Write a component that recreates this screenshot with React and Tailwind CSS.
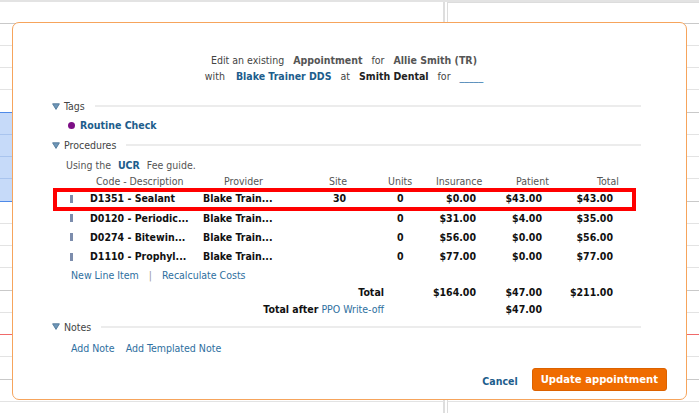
import React from "react";

const slots = Array.from({ length: 18 }, (_, i) => i);

function SlotRow({ i }) {
  const hour = i % 4 === 0;
  const nowLine = i === 14;
  const booked = i >= 4 && i <= 7;
  let leftTop = hour ? "border-[#c9c9c9]" : "border-[#e3e3e3]";
  let rightTop = leftTop;
  if (nowLine) {
    leftTop = "border-[#f06a6a]";
    rightTop = "border-[#f06a6a]";
  }
  if (i === 4 || i === 8) leftTop = "border-[#4f8ae8]";
  else if (booked) leftTop = "border-[#a9c4ee]";
  return (
    <div className="flex h-[22.25px]">
      <div
        className={`w-[445px] border-t border-r-2 border-r-[#dedede] ${leftTop} ${
          booked ? "bg-[#c6daf9]" : "bg-white"
        }`}
      />
      <div className="w-[2px]" />
      <div className={`flex-1 border-t border-l border-l-[#dcdcdc] ${rightTop}`} />
    </div>
  );
}

function Triangle() {
  return (
    <svg width="8" height="7" viewBox="0 0 8 7" className="shrink-0">
      <polygon points="0.6,0.8 7.4,0.8 4,6.4" fill="#6f97b8" stroke="#4f7898" strokeWidth="0.9" strokeLinejoin="round" />
    </svg>
  );
}

function SectionHeader({ label, className = "" }) {
  return (
    <div className={`flex items-center h-[18px] ${className}`}>
      <Triangle />
      <span className="ml-[4px] text-[#444]">{label}</span>
      <div className="ml-[10px] flex-1 h-[2px] bg-[#ececec]" />
    </div>
  );
}

const rows = [
  { code: "D1351 - Sealant", site: "30", ins: "$0.00", pat: "$43.00", tot: "$43.00" },
  { code: "D0120 - Periodic...", site: "", ins: "$31.00", pat: "$4.00", tot: "$35.00" },
  { code: "D0274 - Bitewin...", site: "", ins: "$56.00", pat: "$0.00", tot: "$56.00" },
  { code: "D1110 - Prophyl...", site: "", ins: "$77.00", pat: "$0.00", tot: "$77.00" },
];

export default function App() {
  return (
    <div className="relative w-[699px] h-[413px] overflow-hidden bg-white font-['DejaVu_Sans_Condensed','DejaVu_Sans',sans-serif] text-[10.5px] leading-none">
      {/* calendar grid behind the dialog */}
      <div className="h-[2px] bg-[#e3e3e3]" />
      <div className="flex h-[20.7px]">
        <div className="w-[445px] border-r-2 border-r-[#dedede]" />
        <div className="w-[2px]" />
        <div className="flex-1 border-l border-t border-[#dcdcdc]" />
      </div>
      {slots.map((i) => (
        <SlotRow key={i} i={i} />
      ))}

      {/* edit appointment dialog */}
      <div className="absolute left-[12px] top-[22px] w-[675px] h-[378px] rounded-[7px] border border-[#f6a45c] bg-white flex flex-col">
        <div className="pl-[39px] pr-[45px] pt-[29px]">
          <div className="flex justify-center items-center gap-[9px] h-[16px] text-[#444] -ml-[5px]">
            <span>Edit an existing</span>
            <span className="font-bold text-[#555]">Appointment</span>
            <span>for</span>
            <span className="font-bold text-[#555]">Allie Smith (TR)</span>
          </div>
          <div className="flex justify-center items-center gap-[9px] h-[16px] text-[#444] -ml-[5px]">
            <span className="mr-[2px]">with</span>
            <span className="font-bold text-[#1d5d8c]">Blake Trainer DDS</span>
            <span>at</span>
            <span className="font-bold text-[#222]">Smith Dental</span>
            <span>for</span>
            <span className="text-[#3a7ab0]">_____</span>
          </div>

          <SectionHeader label="Tags" className="mt-[13px]" />
          <div className="flex items-center h-[18px] mt-[1px]">
            <span className="ml-[16px] w-[7px] h-[7px] rounded-full bg-[#7d0f86]" />
            <span className="ml-[5px] font-bold text-[#1d5d8c]">Routine Check</span>
          </div>

          <SectionHeader label="Procedures" className="mt-[2px]" />
          <div className="flex items-center h-[16px] mt-[3px] ml-[14px] text-[#555] gap-[7px]">
            <span>Using the</span>
            <span className="font-bold text-[#1d5d8c]">UCR</span>
            <span>Fee guide.</span>
          </div>

          <div className="ml-[1px] w-[583px]">
            <div className="flex items-center h-[16px] text-[#555]">
              <div className="w-[43px]" />
              <div className="w-[128px]">Code - Description</div>
              <div className="w-[105px]">Provider</div>
              <div className="w-[59px]">Site</div>
              <div className="w-[48px]">Units</div>
              <div className="w-[80px]">Insurance</div>
              <div className="w-[81px]">Patient</div>
              <div>Total</div>
            </div>

            {rows.map((r, idx) => (
              <div key={r.code} className="relative flex items-center h-[19.33px] font-bold text-[#111]">
                {idx === 0 && (
                  <div className="absolute left-0 right-0 top-[-1.5px] bottom-[-2.5px] border-[4px] border-[#ff0000]" />
                )}
                <div className="w-[37px] flex">
                  <span className="ml-[17px] w-[3px] h-[8px] bg-[#7c8dad]" />
                </div>
                <div className="w-[113px]">{r.code}</div>
                <div className="w-[130px]">Blake Train...</div>
                <div className="w-[64px]">{r.site}</div>
                <div className="w-[13px]">0</div>
                <div className="w-[66px] text-right">{r.ins}</div>
                <div className="w-[66px] text-right">{r.pat}</div>
                <div className="w-[71px] text-right">{r.tot}</div>
              </div>
            ))}

            <div className="flex items-center h-[18px] pl-[18px] text-[#2e6fa0]">
              <span>New Line Item</span>
              <span className="mx-[10px] text-[#999]">|</span>
              <span>Recalculate Costs</span>
            </div>

            <div className="flex items-center h-[16px] font-bold text-[#111]">
              <div className="w-[331px] text-right">Total</div>
              <div className="w-[92px] text-right">$164.00</div>
              <div className="w-[66px] text-right">$47.00</div>
              <div className="w-[71px] text-right">$211.00</div>
            </div>
            <div className="flex items-center h-[17px] text-[#111]">
              <div className="w-[331px] text-right">
                <span className="font-bold">Total after</span>{" "}
                <span className="text-[#2e6fa0]">PPO Write-off</span>
              </div>
              <div className="w-[92px]" />
              <div className="w-[66px] text-right font-bold">$47.00</div>
            </div>
          </div>

          <SectionHeader label="Notes" className="mt-[0.5px]" />
          <div className="flex items-center h-[18px] mt-[3px] pl-[19px] gap-[11px] text-[#2e6fa0]">
            <span>Add Note</span>
            <span>Add Templated Note</span>
          </div>
        </div>

        <div className="mt-auto flex justify-end items-center gap-[14px] pr-[19px] pb-[8px]">
          <span className="font-bold text-[#1d5d8c] mt-[3px]">Cancel</span>
          <button className="h-[23px] px-[8px] rounded-[3px] border border-[#dc6200] bg-[#ef6c00] text-white font-bold text-[11.2px] leading-none font-['DejaVu_Sans_Condensed','DejaVu_Sans',sans-serif]">
            Update appointment
          </button>
        </div>
      </div>
    </div>
  );
}
